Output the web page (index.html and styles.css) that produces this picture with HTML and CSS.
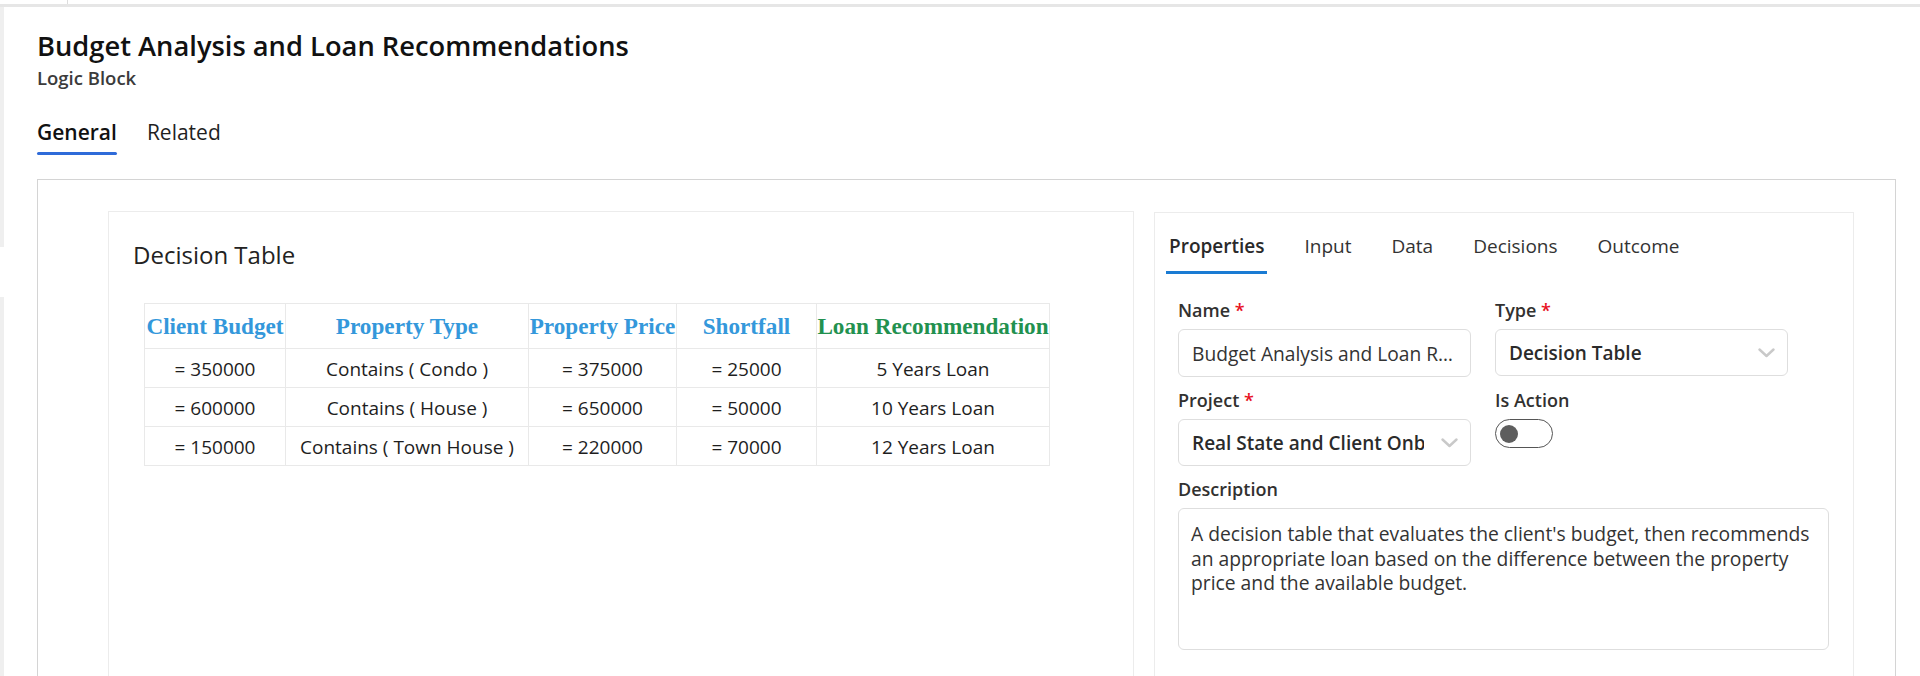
FILE: index.html
```html
<!DOCTYPE html>
<html lang="en">
<head>
<meta charset="utf-8">
<title>Budget Analysis and Loan Recommendations</title>
<link rel="stylesheet" href="styles.css">
</head>
<body>
<div class="topstrip"><div class="topcell"></div></div>
<div class="layout">
  <div class="leftrail"><div class="rail-a"></div><div class="rail-gap"></div><div class="rail-b"></div></div>
  <main class="main">
    <header class="head">
      <h1 class="title">Budget Analysis and Loan Recommendations</h1>
      <div class="subtitle">Logic Block</div>
      <nav class="pagetabs">
        <span class="ptab active">General</span>
        <span class="ptab">Related</span>
      </nav>
    </header>
    <section class="frame">
      <div class="dt-card">
        <h2 class="dt-title">Decision Table</h2>
        <table class="dt">
          <colgroup>
            <col class="c1"><col class="c2"><col class="c3"><col class="c4"><col class="c5">
          </colgroup>
          <thead>
            <tr>
              <th class="in">Client Budget</th>
              <th class="in">Property Type</th>
              <th class="in">Property Price</th>
              <th class="in">Shortfall</th>
              <th class="out">Loan Recommendation</th>
            </tr>
          </thead>
          <tbody>
            <tr><td>= 350000</td><td>Contains ( Condo )</td><td>= 375000</td><td>= 25000</td><td>5 Years Loan</td></tr>
            <tr><td>= 600000</td><td>Contains ( House )</td><td>= 650000</td><td>= 50000</td><td>10 Years Loan</td></tr>
            <tr><td>= 150000</td><td>Contains ( Town House )</td><td>= 220000</td><td>= 70000</td><td>12 Years Loan</td></tr>
          </tbody>
        </table>
      </div>
      <aside class="props">
        <nav class="ptabs">
          <span class="stab active">Properties</span>
          <span class="stab">Input</span>
          <span class="stab">Data</span>
          <span class="stab">Decisions</span>
          <span class="stab">Outcome</span>
        </nav>
        <form class="form">
          <div class="fld col1">
            <label class="lbl">Name <span class="req">*</span></label>
            <input class="input" type="text" value="Budget Analysis and Loan Recommendations" readonly>
          </div>
          <div class="fld col2">
            <label class="lbl">Type <span class="req">*</span></label>
            <div class="select"><span class="sel-val">Decision Table</span>
              <svg class="chev" width="17" height="10" viewBox="0 0 17 10"><path d="M1.5 1.5 L8.5 8 L15.5 1.5" fill="none" stroke="#c9c9c9" stroke-width="2.4" stroke-linecap="round" stroke-linejoin="round"/></svg>
            </div>
          </div>
          <div class="fld col1">
            <label class="lbl">Project <span class="req">*</span></label>
            <div class="select"><span class="sel-val">Real State and Client Onboarding</span>
              <svg class="chev" width="17" height="10" viewBox="0 0 17 10"><path d="M1.5 1.5 L8.5 8 L15.5 1.5" fill="none" stroke="#c9c9c9" stroke-width="2.4" stroke-linecap="round" stroke-linejoin="round"/></svg>
            </div>
          </div>
          <div class="fld col2">
            <label class="lbl">Is Action</label>
            <span class="toggle"><span class="knob"></span></span>
          </div>
          <div class="fld wide">
            <label class="lbl">Description</label>
            <textarea class="textarea" readonly>A decision table that evaluates the client's budget, then recommends an appropriate loan based on the difference between the property price and the available budget.</textarea>
          </div>
        </form>
      </aside>
    </section>
  </main>
</div>
</body>
</html>
```
FILE: styles.css
```css
* { box-sizing: border-box; }
html, body { margin: 0; padding: 0; }
body {
  height: 676px;
  overflow: hidden;
  background: #ffffff;
  font-family: "Open Sans", "Noto Sans", Arial, sans-serif;
  color: #323130;
}
.topstrip {
  height: 7px;
  border-bottom: 3px solid #e6e6e6;
}
.topcell {
  width: 68px;
  height: 4px;
  border-right: 1px solid #dddddd;
}
.layout {
  display: flex;
  height: 669px;
}
.leftrail {
  width: 4px;
  flex: none;
  display: flex;
  flex-direction: column;
}
.rail-a { height: 240px; background: #efefef; }
.rail-gap { height: 50px; }
.rail-b { flex: 1; background: #efefef; }
.main {
  flex: 1;
  padding: 0 24px 0 33px;
}
.head { padding-top: 20px; }
.title {
  margin: 0;
  font-size: 27.3px;
  line-height: 38px;
  font-weight: 600;
  color: #111111;
}
.subtitle {
  margin-top: 1px;
  font-size: 18.5px;
  line-height: 24px;
  font-weight: 600;
  color: #3b3b3b;
}
.pagetabs {
  margin-top: 28px;
  display: flex;
  gap: 30px;
}
.ptab {
  display: flex;
  flex-direction: column;
  font-size: 21px;
  line-height: 28px;
  color: #1f1f1f;
}
.ptab::after {
  content: "";
  height: 3px;
  margin-top: 6px;
  border-radius: 2px;
}
.ptab.active { font-weight: 600; color: #111111; }
.ptab.active::after { background: #2f6bd9; }

.frame {
  margin-top: 24px;
  border: 1px solid #d4d4d4;
  padding: 31px 41px 0 70px;
  display: flex;
  gap: 20px;
  height: 600px;
}
.dt-card {
  flex: 1;
  border: 1px solid #ececec;
  padding: 27px 24px 0 24px;
}
.dt-title {
  margin: 0;
  font-size: 24px;
  line-height: 32px;
  font-weight: 500;
  color: #222222;
}
.dt {
  margin: 32px 0 0 11px;
  border-collapse: collapse;
  table-layout: fixed;
  width: 905px;
}
.c1 { width: 141px; }
.c2 { width: 243px; }
.c3 { width: 148px; }
.c4 { width: 140px; }
.c5 { width: 233px; }
.dt th, .dt td {
  border: 1px solid #e9e9e9;
  padding: 0;
  text-align: center;
  white-space: nowrap;
}
.dt th {
  height: 45px;
  font-family: "Liberation Serif", "Times New Roman", serif;
  font-weight: 700;
  font-size: 23.2px;
  line-height: 28px;
}
.dt th.in { color: #3498db; }
.dt th.out { color: #22914f; }
.dt td {
  height: 39px;
  padding-top: 2px;
  font-size: 19px;
  line-height: 26px;
  color: #1e1e1e;
}

.props {
  width: 700px;
  flex: none;
  border: 1px solid #ececec;
  margin-top: 1px;
}
.ptabs {
  display: flex;
  gap: 34px;
  padding: 19px 0 0 11px;
}
.stab {
  display: flex;
  flex-direction: column;
  padding: 0 3px;
  font-size: 19px;
  line-height: 28px;
  color: #333333;
}
.stab::after {
  content: "";
  height: 3px;
  margin: 11px -3px 0;
}
.stab.active { font-weight: 600; color: #2a2a2a; }
.stab.active::after { background: #1a7bd3; }

.form {
  display: grid;
  grid-template-columns: 293px 293px 1fr;
  column-gap: 24px;
  row-gap: 11px;
  padding: 24px 24px 0 23px;
}
.fld { display: flex; flex-direction: column; align-items: flex-start; }
.fld.col1 { grid-column: 1; }
.fld.col2 { grid-column: 2; }
.fld.wide { grid-column: 1 / -1; align-items: stretch; }
.lbl {
  font-size: 18px;
  line-height: 24px;
  font-weight: 600;
  color: #323130;
  margin-bottom: 7px;
}
.req { color: #e81123; font-weight: 600; }
.input {
  width: 293px;
  height: 48px;
  border: 1px solid #dedede;
  border-radius: 6px;
  padding: 0 14px 0 13px;
  font-family: "Open Sans", "Noto Sans", Arial, sans-serif;
  font-size: 19.2px;
  color: #333333;
  text-overflow: ellipsis;
  outline: none;
  background: #fff;
}
.select {
  position: relative;
  width: 293px;
  height: 47px;
  border: 1px solid #dedede;
  border-radius: 6px;
  padding: 0 46px 0 13px;
  display: flex;
  align-items: center;
  overflow: hidden;
}
.sel-val {
  white-space: nowrap;
  overflow: hidden;
  font-size: 19px;
  font-weight: 600;
  color: #2b2b2b;
}
.chev {
  position: absolute;
  right: 12px;
  top: 18px;
}
.toggle {
  width: 58px;
  height: 29px;
  border: 1.5px solid #555555;
  border-radius: 15px;
  display: flex;
  align-items: center;
  padding-left: 4px;
}
.knob {
  width: 18px;
  height: 18px;
  border-radius: 50%;
  background: #5e5e5e;
}
.textarea {
  width: 651px;
  height: 142px;
  border: 1px solid #dedede;
  border-radius: 6px;
  padding: 13px 12px;
  resize: none;
  outline: none;
  font-family: "Open Sans", "Noto Sans", Arial, sans-serif;
  font-size: 19.3px;
  line-height: 24.5px;
  color: #333333;
  overflow: hidden;
}
```
